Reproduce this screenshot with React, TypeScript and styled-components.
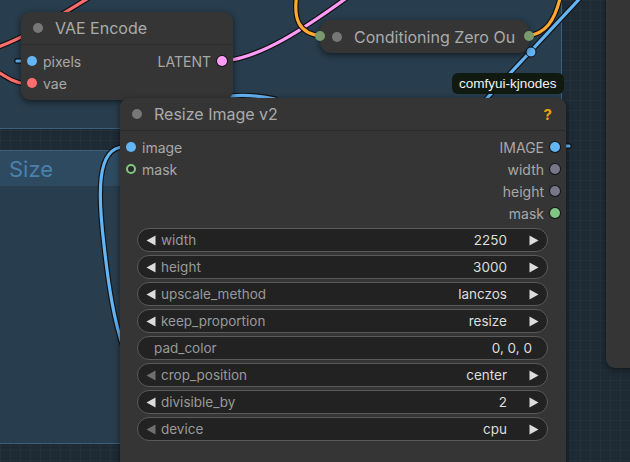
import styled, { createGlobalStyle } from "styled-components";

const GlobalStyle = createGlobalStyle`
  html, body {
    margin: 0;
    padding: 0;
    background: #1e2a34;
  }
  body {
    font-family: Inter, "Noto Sans", sans-serif;
  }
`;

// canvas + groups
const Canvas = styled.div`
  position: relative;
  width: 630px;
  height: 462px;
  overflow: hidden;
  background-color: #1e2a34;
  background-image: linear-gradient(rgba(255, 255, 255, 0.025) 1px, transparent 1px),
    linear-gradient(90deg, rgba(255, 255, 255, 0.025) 1px, transparent 1px);
  background-size: 10px 10px;
`;

const Group = styled.div<{ $x: number; $y: number; $w: number; $h: number }>`
  position: absolute;
  left: ${(p) => p.$x}px;
  top: ${(p) => p.$y}px;
  width: ${(p) => p.$w}px;
  height: ${(p) => p.$h}px;
  display: flex;
  flex-direction: column;
  background: #283d4d;
  border: 1px solid #3a5f7d;
  box-sizing: border-box;
`;

const GroupTitle = styled.div`
  height: 35px;
  display: flex;
  align-items: center;
  padding-left: 18px;
  background: #2e4a60;
  color: #4a81ab;
  font-size: 22px;
`;

const Wires = styled.svg`
  position: absolute;
  left: 0;
  top: 0;
  width: 630px;
  height: 462px;
  pointer-events: none;
`;

// nodes
const NodeBox = styled.div<{ $x: number; $y: number; $w: number; $h?: number }>`
  position: absolute;
  left: ${(p) => p.$x}px;
  top: ${(p) => p.$y}px;
  width: ${(p) => p.$w}px;
  ${(p) => (p.$h ? `height: ${p.$h}px;` : "")}
  background: #353535;
  border-radius: 9px;
  box-shadow: 0 2px 6px rgba(0, 0, 0, 0.55);
  display: flex;
  flex-direction: column;
  color: #a8a8a8;
`;

const TitleBar = styled.div`
  height: 32px;
  display: flex;
  align-items: center;
  gap: 12px;
  padding: 0 14px 0 12px;
  border-bottom: 1px solid #2b2b2b;
`;

const TitleDot = styled.span`
  width: 10px;
  height: 10px;
  border-radius: 50%;
  background: #777;
  flex: none;
`;

const TitleText = styled.span`
  font-size: 16px;
  color: #ababab;
  flex: 1;
  white-space: nowrap;
  overflow: hidden;
`;

const Help = styled.span`
  color: #f0a30a;
  font-weight: 700;
  font-size: 15px;
`;

const SlotArea = styled.div`
  display: flex;
  justify-content: space-between;
  padding: 5px 0 4px;
`;

const SlotColumn = styled.div<{ $out?: boolean }>`
  display: flex;
  flex-direction: column;
  align-items: ${(p) => (p.$out ? "flex-end" : "flex-start")};
`;

const SlotRow = styled.div<{ $out?: boolean }>`
  height: 22px;
  display: flex;
  align-items: center;
  flex-direction: ${(p) => (p.$out ? "row-reverse" : "row")};
  gap: 6px;
  padding: 0 6px;
  font-size: 14px;
  color: #a8a8a8;
`;

const Dot = styled.span<{ $color: string; $outline?: boolean; $hollow?: boolean }>`
  width: 10px;
  height: 10px;
  box-sizing: border-box;
  border-radius: 50%;
  flex: none;
  background: ${(p) => (p.$hollow ? "#2a2a2a" : p.$color)};
  border: ${(p) => (p.$hollow ? `2.5px solid ${p.$color}` : "none")};
  box-shadow: ${(p) => (p.$outline ? "0 0 0 1px #151515" : "none")};
`;

const WidgetList = styled.div`
  display: flex;
  flex-direction: column;
  gap: 3px;
  padding: 0 18px 20px 17px;
`;

const WidgetRow = styled.div<{ $plain?: boolean }>`
  height: 24px;
  box-sizing: border-box;
  display: flex;
  align-items: center;
  gap: 5px;
  padding: ${(p) => (p.$plain ? "0 15px 0 16px" : "0 8px 0 8px")};
  background: #222;
  border: 1px solid #5a5a5a;
  border-radius: 12px;
  font-size: 13.5px;
`;

const WidgetLabel = styled.span`
  flex: 1;
  color: #999;
`;

const WidgetValue = styled.span<{ $plain?: boolean }>`
  color: #dcdcdc;
  margin-right: ${(p) => (p.$plain ? 0 : 17)}px;
`;

// collapsed node + misc
const Collapsed = styled.div`
  position: absolute;
  left: 320px;
  top: 20px;
  width: 209px;
  height: 33px;
  border-radius: 11px;
  background: #353535;
  box-shadow: 0 2px 6px rgba(0, 0, 0, 0.55);
  display: flex;
  align-items: center;
  gap: 12px;
  padding-left: 12px;
  box-sizing: border-box;
`;

const EdgeDot = styled.span<{ $side: "left" | "right" }>`
  position: absolute;
  top: 11px;
  ${(p) => p.$side}: -5px;
  width: 10px;
  height: 10px;
  border-radius: 50%;
  background: #799a6d;
`;

const Tooltip = styled.div`
  position: absolute;
  left: 452px;
  top: 73px;
  height: 21px;
  padding: 0 7px;
  border-radius: 6px;
  background: #101a10;
  color: #f2f2f2;
  font-family: "Liberation Sans", Arial, sans-serif;
  font-size: 13.5px;
  line-height: 21px;
`;

const SidePanel = styled.div`
  position: absolute;
  left: 606px;
  top: -10px;
  width: 40px;
  height: 378px;
  background: #353535;
  border-radius: 9px;
  box-shadow: 0 2px 6px rgba(0, 0, 0, 0.45);
`;

const Arrow = ({ dir, dim }: { dir: "l" | "r"; dim?: boolean }) => (
  <svg width="10" height="11" viewBox="0 0 10 11" style={{ flex: "none" }}>
    <path d={dir === "l" ? "M9.5 0.5 L0.5 5.5 L9.5 10.5 Z" : "M0.5 0.5 L9.5 5.5 L0.5 10.5 Z"} fill={dim ? "#6f6f6f" : "#dcdcdc"} />
  </svg>
);

type WidgetDef = { label: string; value: string; dim?: boolean; plain?: boolean };

const widgets: WidgetDef[] = [
  { label: "width", value: "2250" },
  { label: "height", value: "3000" },
  { label: "upscale_method", value: "lanczos" },
  { label: "keep_proportion", value: "resize" },
  { label: "pad_color", value: "0, 0, 0", plain: true },
  { label: "crop_position", value: "center", dim: true },
  { label: "divisible_by", value: "2" },
  { label: "device", value: "cpu", dim: true },
];

const Widget = ({ label, value, dim, plain }: WidgetDef) => (
  <WidgetRow $plain={plain}>
    {!plain && <Arrow dir="l" dim={dim} />}
    <WidgetLabel>{label}</WidgetLabel>
    <WidgetValue $plain={plain}>{value}</WidgetValue>
    {!plain && <Arrow dir="r" />}
  </WidgetRow>
);

const links: { d: string; color: string }[] = [
  { d: "M -5 48 C 25 38, 60 15, 92 -4", color: "#ff6e6e" },
  { d: "M -5 70 C 6 77, 14 83, 26 84", color: "#ff6e6e" },
  { d: "M 17 61 L 26 61", color: "#64b5f6" },
  { d: "M 222 97 C 240 94, 256 95, 275 99", color: "#64b5f6" },
  { d: "M 584 -6 L 476 110", color: "#64b5f6" },
  { d: "M 226 61 C 262 56, 300 32, 352 -6", color: "#ff9cf9" },
  { d: "M 297 -6 C 293 18, 298 34, 322 36", color: "#ffa931" },
  { d: "M 527 36 C 545 34, 555 22, 561 -6", color: "#ffa931" },
  { d: "M 124 147 C 96 147, 98 195, 104 245 C 109 290, 114 320, 124 350", color: "#64b5f6" },
  { d: "M 562 146 L 569 146", color: "#64b5f6" },
];

export default function App() {
  return (
    <>
      <GlobalStyle />
      <Canvas>
        <Group $x={-10} $y={-10} $w={572} $h={139} />
        <Group $x={-10} $y={150} $w={560} $h={294}>
          <GroupTitle>Size</GroupTitle>
        </Group>

        <Wires viewBox="0 0 630 462">
          {links.map((l, i) => (
            <g key={i} fill="none" strokeLinecap="round">
              <path d={l.d} stroke="#121212" strokeWidth={5.5} />
              <path d={l.d} stroke={l.color} strokeWidth={3.2} />
            </g>
          ))}
          <circle cx={531} cy={52} r={5} fill="#64b5f6" stroke="#121212" strokeWidth={1} />
        </Wires>

        <SidePanel />

        <NodeBox $x={21} $y={12} $w={212} $h={88}>
          <TitleBar>
            <TitleDot />
            <TitleText>VAE Encode</TitleText>
          </TitleBar>
          <SlotArea>
            <SlotColumn>
              <SlotRow>
                <Dot $color="#64b5f6" />
                pixels
              </SlotRow>
              <SlotRow>
                <Dot $color="#ff6e6e" />
                vae
              </SlotRow>
            </SlotColumn>
            <SlotColumn $out>
              <SlotRow $out>
                <Dot $color="#ff9cf9" $outline />
                LATENT
              </SlotRow>
            </SlotColumn>
          </SlotArea>
        </NodeBox>

        <Collapsed>
          <EdgeDot $side="left" />
          <TitleDot />
          <TitleText>Conditioning Zero Ou</TitleText>
          <EdgeDot $side="right" />
        </Collapsed>

        <Tooltip>comfyui-kjnodes</Tooltip>

        <NodeBox $x={120} $y={98} $w={446} $h={380}>
          <TitleBar>
            <TitleDot />
            <TitleText>Resize Image v2</TitleText>
            <Help>?</Help>
          </TitleBar>
          <SlotArea>
            <SlotColumn>
              <SlotRow>
                <Dot $color="#64b5f6" />
                image
              </SlotRow>
              <SlotRow>
                <Dot $color="#81c784" $hollow />
                mask
              </SlotRow>
            </SlotColumn>
            <SlotColumn $out>
              <SlotRow $out>
                <Dot $color="#64b5f6" $outline />
                IMAGE
              </SlotRow>
              <SlotRow $out>
                <Dot $color="#77778a" $outline />
                width
              </SlotRow>
              <SlotRow $out>
                <Dot $color="#77778a" $outline />
                height
              </SlotRow>
              <SlotRow $out>
                <Dot $color="#81c784" $outline />
                mask
              </SlotRow>
            </SlotColumn>
          </SlotArea>
          <WidgetList>
            {widgets.map((w) => (
              <Widget key={w.label} {...w} />
            ))}
          </WidgetList>
        </NodeBox>
      </Canvas>
    </>
  );
}
